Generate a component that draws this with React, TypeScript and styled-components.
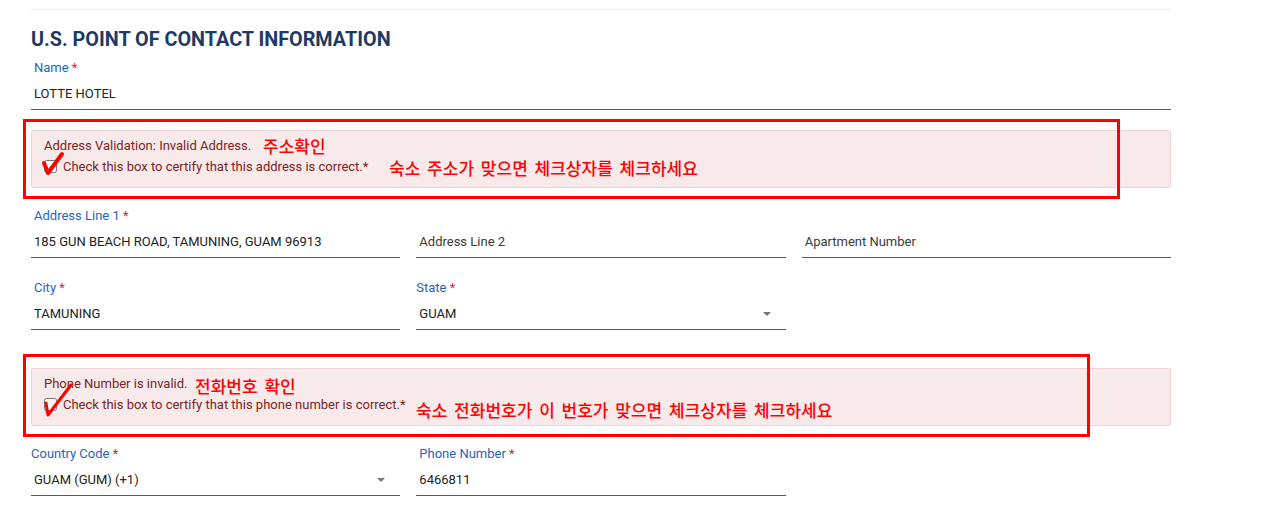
import styled, { createGlobalStyle } from "styled-components";

const GlobalStyle = createGlobalStyle`
  body {
    margin: 0;
    background: #ffffff;
    font-family: Roboto, "Noto Sans", Arial, sans-serif;
  }
`;

const Page = styled.div`
  width: 1140px;
  margin-left: 31px;
  padding-top: 9px;
`;

const Divider = styled.div`
  border-top: 1px solid #ebebeb;
`;

const Heading = styled.h2`
  margin: 18px 0 8px;
  font-size: 19.8px;
  line-height: 24px;
  font-weight: 700;
  color: #1c3a64;
`;

const Row = styled.div<{ $top?: number }>`
  display: grid;
  grid-template-columns: repeat(3, 1fr);
  column-gap: 16px;
  margin-top: ${(p) => p.$top ?? 0}px;
`;

const Wide = styled.div`
  grid-column: 1 / -1;
`;

const FieldBox = styled.div`
  display: flex;
  flex-direction: column;
`;

const Label = styled.label<{ $flush?: boolean }>`
  height: 16px;
  font-size: 13px;
  line-height: 16px;
  color: #1f65ba;
  padding-left: ${(p) => (p.$flush ? 0 : 3)}px;
`;

const Star = styled.span`
  color: #e0203a;
`;

const Input = styled.div<{ $placeholder?: boolean }>`
  position: relative;
  box-sizing: border-box;
  height: 34px;
  padding: 8px 3px 0;
  font-size: 13px;
  line-height: 20px;
  color: ${(p) => (p.$placeholder ? "#3a3a3a" : "#222222")};
  border-bottom: 1px solid #5a5a5a;
`;

const Caret = styled.span`
  position: absolute;
  right: 15px;
  top: 16px;
  width: 0;
  height: 0;
  border-left: 4px solid transparent;
  border-right: 4px solid transparent;
  border-top: 4px solid #777777;
`;

const AlertWrap = styled.div<{ $top: number }>`
  position: relative;
  margin-top: ${(p) => p.$top}px;
`;

const Alert = styled.div`
  background: #f8e9ea;
  border: 1px solid #efd4d7;
  border-radius: 2px;
  padding: 6px 12px 10px;
  color: #7a2525;
  font-size: 13px;
`;

const AlertLine = styled.div`
  height: 18px;
  line-height: 18px;
`;

const CheckLine = styled.label`
  display: flex;
  align-items: center;
  height: 22px;
`;

const Box = styled.input`
  width: 13px;
  height: 13px;
  margin: 0 6px 0 0;
`;

const Marker = styled.div<{ $l: number; $t: number; $w: number; $h: number }>`
  position: absolute;
  left: ${(p) => p.$l}px;
  top: ${(p) => p.$t}px;
  width: ${(p) => p.$w}px;
  height: ${(p) => p.$h}px;
  border: 3px solid #ff0000;
  box-sizing: border-box;
  pointer-events: none;
`;

const Note = styled.span<{ $l: number; $t: number }>`
  position: absolute;
  left: ${(p) => p.$l}px;
  top: ${(p) => p.$t}px;
  font-family: "Noto Sans CJK KR", "Noto Sans", sans-serif;
  font-size: 17px;
  line-height: 22px;
  font-weight: 500;
  word-spacing: 3px;
  color: #ff0000;
  white-space: nowrap;
`;

const Tick = styled.svg<{ $l: number; $t: number }>`
  position: absolute;
  left: ${(p) => p.$l}px;
  top: ${(p) => p.$t}px;
  overflow: visible;
`;

type FieldProps = {
  label?: string;
  required?: boolean;
  value: string;
  placeholder?: boolean;
  select?: boolean;
  flush?: boolean;
};

function Field({ label, required, value, placeholder, select, flush }: FieldProps) {
  return (
    <FieldBox>
      <Label $flush={flush}>
        {label}
        {required && <Star> *</Star>}
      </Label>
      <Input $placeholder={placeholder}>
        {value}
        {select && <Caret />}
      </Input>
    </FieldBox>
  );
}

export default function App() {
  return (
    <>
      <GlobalStyle />
      <Page>
        <Divider />
        <Heading>U.S. POINT OF CONTACT INFORMATION</Heading>
        <Row>
          <Wide>
            <Field label="Name" required value="LOTTE HOTEL" />
          </Wide>
        </Row>

        <AlertWrap $top={20}>
          <Alert>
            <AlertLine>Address Validation: Invalid Address.</AlertLine>
            <CheckLine>
              <Box type="checkbox" />
              Check this box to certify that this address is correct.*
            </CheckLine>
          </Alert>
          <Marker $l={-8} $t={-11} $w={1097} $h={80} />
          <Note $l={232} $t={5}>주소확인</Note>
          <Note $l={358} $t={27}>숙소 주소가 맞으면 체크상자를 체크하세요</Note>
          <Tick $l={11} $t={23} width="22" height="22" viewBox="0 0 22 22">
            <path
              d="M2 10 L6 20 L20 1"
              fill="none"
              stroke="#ff0000"
              strokeWidth="4"
              strokeLinecap="round"
              strokeLinejoin="round"
            />
          </Tick>
        </AlertWrap>

        <Row $top={20}>
          <Field label="Address Line 1" required value="185 GUN BEACH ROAD, TAMUNING, GUAM 96913" />
          <Field value="Address Line 2" placeholder />
          <Field value="Apartment Number" placeholder />
        </Row>
        <Row $top={22}>
          <Field label="City" required value="TAMUNING" />
          <Field label="State" required value="GUAM" select flush />
        </Row>

        <AlertWrap $top={38}>
          <Alert>
            <AlertLine>Phone Number is invalid.</AlertLine>
            <CheckLine>
              <Box type="checkbox" />
              Check this box to certify that this phone number is correct.*
            </CheckLine>
          </Alert>
          <Marker $l={-8} $t={-14} $w={1067} $h={83} />
          <Note $l={164} $t={7}>전화번호 확인</Note>
          <Note $l={385} $t={31}>숙소 전화번호가 이 번호가 맞으면 체크상자를 체크하세요</Note>
          <Tick $l={12} $t={15} width="30" height="36" viewBox="0 0 30 36">
            <path
              d="M3 20 L5 32 L28 2"
              fill="none"
              stroke="#ff0000"
              strokeWidth="3"
              strokeLinecap="round"
              strokeLinejoin="round"
            />
          </Tick>
        </AlertWrap>

        <Row $top={20}>
          <Field label="Country Code" required value="GUAM (GUM) (+1)" select flush />
          <Field label="Phone Number" required value="6466811" />
        </Row>
      </Page>
    </>
  );
}
